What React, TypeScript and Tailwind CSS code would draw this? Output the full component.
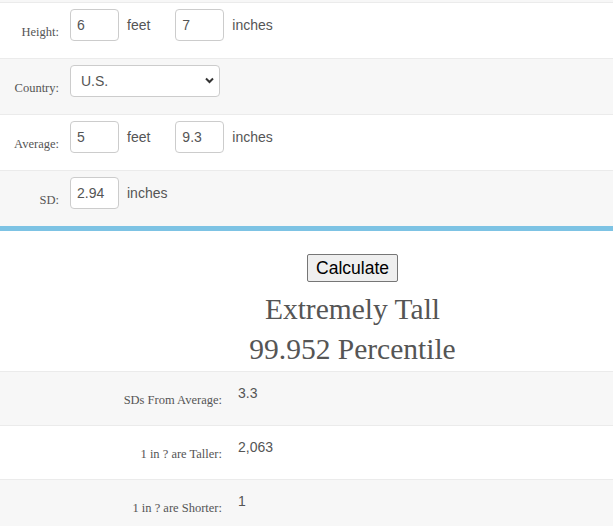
const serif = { fontFamily: '"Liberation Serif", "DejaVu Serif", serif' };
const sans = { fontFamily: '"Liberation Sans", Arial, sans-serif' };

function Label({ children }: { children: React.ReactNode }) {
  return (
    <div className="w-[60px] shrink-0 pt-[21px] pr-[1px] text-right text-[12.5px] leading-[16px] text-[#555]" style={serif}>
      {children}
    </div>
  );
}

function NumInput({ value }: { value: string }) {
  return (
    <input
      defaultValue={value}
      className="w-[49px] h-[32px] rounded-[4px] border border-[#ccc] bg-white px-[6px] text-[14px] text-[#555] outline-none"
      style={sans}
    />
  );
}

function Unit({ children, wide }: { children: React.ReactNode; wide?: boolean }) {
  return (
    <span className={`ml-[8px] text-[14px] leading-[20px] text-[#555] ${wide ? 'mr-[25px]' : ''}`} style={sans}>
      {children}
    </span>
  );
}

function FormRow({ label, gray, children }: { label: string; gray?: boolean; children: React.ReactNode }) {
  return (
    <div className={`flex h-[56px] border-t border-[#ebebeb] ${gray ? 'bg-[#f7f7f7]' : 'bg-white'}`}>
      <Label>{label}</Label>
      <div className="ml-[10px] flex h-[32px] items-center mt-[6px]">{children}</div>
    </div>
  );
}

const results = [
  { label: 'SDs From Average:', value: '3.3' },
  { label: '1 in ? are Taller:', value: '2,063' },
  { label: '1 in ? are Shorter:', value: '1' },
];

export default function App() {
  return (
    <div className="w-[613px] h-[526px] overflow-hidden bg-white">
      <div className="h-[2px] bg-[#f7f7f7]" />

      <FormRow label="Height:">
        <NumInput value="6" />
        <Unit wide>feet</Unit>
        <NumInput value="7" />
        <Unit>inches</Unit>
      </FormRow>

      <FormRow label="Country:" gray>
        <div className="relative">
          <select
            className="w-[150px] h-[32px] appearance-none rounded-[4px] border border-[#ccc] bg-white pl-[10px] text-[14px] text-[#555] outline-none"
            style={sans}
            defaultValue="us"
          >
            <option value="us">U.S.</option>
          </select>
          <svg className="pointer-events-none absolute right-[6px] top-[12px]" width="9" height="7" viewBox="0 0 9 7">
            <path d="M1 1.5 L4.5 5 L8 1.5" fill="none" stroke="#333" strokeWidth="2" />
          </svg>
        </div>
      </FormRow>

      <FormRow label="Average:">
        <NumInput value="5" />
        <Unit wide>feet</Unit>
        <NumInput value="9.3" />
        <Unit>inches</Unit>
      </FormRow>

      <FormRow label="SD:" gray>
        <NumInput value="2.94" />
        <Unit>inches</Unit>
      </FormRow>

      <div className="h-[5px] bg-[#7dc3e4]" />

      {/* result */}
      <div className="flex flex-col items-center pl-[92px] pt-[23px]">
        <button
          className="h-[28px] rounded-[2px] border border-[#767676] bg-[#efefef] px-[8px] text-[17.5px] leading-[20px] text-black"
          style={sans}
        >
          Calculate
        </button>
        <div className="mt-[7px] mb-[2px] text-center text-[29.5px] leading-[40px] text-[#555]" style={serif}>
          <div>Extremely Tall</div>
          <div>99.952 Percentile</div>
        </div>
      </div>

      {results.map((r, i) => (
        <div key={r.label} className={`flex h-[54px] border-t border-[#ebebeb] ${i % 2 === 0 ? 'bg-[#f7f7f7]' : 'bg-white'}`}>
          <div className="w-[222px] shrink-0 pt-[20px] text-right text-[12.5px] leading-[16px] text-[#555]" style={serif}>
            {r.label}
          </div>
          <div className="ml-[16px] pt-[11px] text-[14px] leading-[20px] text-[#555]" style={sans}>
            {r.value}
          </div>
        </div>
      ))}
    </div>
  );
}
